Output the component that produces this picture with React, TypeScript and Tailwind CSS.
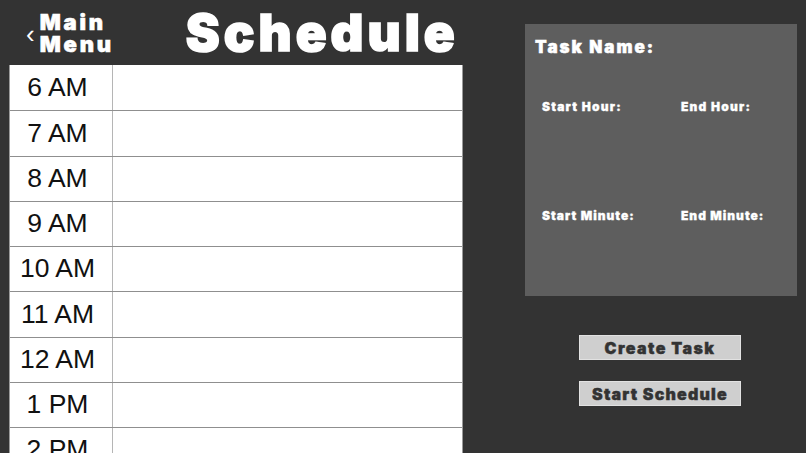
const HOURS = ["6 AM", "7 AM", "8 AM", "9 AM", "10 AM", "11 AM", "12 AM", "1 PM", "2 PM", "3 PM"];

const heavy = "font-['Inter','Roboto',sans-serif] font-black";

const App = (): JSX.Element => {
  return (
    <div className="w-[806px] h-[453px] overflow-hidden bg-[#333333] flex">
      <div className="w-[463px] pl-[9px] flex flex-col shrink-0">
        <div className="h-[65px] flex items-center shrink-0">
          <span className="ml-[17px] mt-[2px] text-white text-[26px] leading-none font-['Liberation_Sans',sans-serif]">
            ‹
          </span>
          <div className={`ml-[5px] text-white text-[22px] leading-[22px] ${heavy} tracking-[2.8px] [-webkit-text-stroke:0.6px_white]`}>
            <div>Main</div>
            <div>Menu</div>
          </div>
          <div className={`ml-[72px] text-white text-[51px] leading-none ${heavy} tracking-[4px] [-webkit-text-stroke:1.6px_white]`}>
            Schedule
          </div>
        </div>
        <div className="bg-white border-l border-r border-[#9a9a9a] flex flex-col">
          {HOURS.map((hour, i) => (
            <div
              key={hour}
              className={`h-[45.25px] shrink-0 flex ${i > 0 ? "border-t border-[#8f8f8f]" : ""}`}
            >
              <div className="w-[103px] shrink-0 border-r border-[#b5b5b5] flex items-center justify-center pr-[7px] text-[26.5px] text-[#111] font-['Liberation_Sans',sans-serif]">
                {hour}
              </div>
              <div className="flex-1" />
            </div>
          ))}
        </div>
      </div>
      <div className="flex-1 pl-[62px] pr-[9px] pt-[24px] flex flex-col">
        <div className="h-[272px] bg-[#5e5e5e] pl-[10px] pt-[12px] text-white">
          <div className={`text-[17px] leading-[22px] ${heavy} tracking-[2px] [-webkit-text-stroke:0.5px_white]`}>Task Name:</div>
          <div className={`mt-[40px] grid grid-cols-[139px_1fr] pl-[7px] text-[12px] ${heavy} tracking-[1.2px] [-webkit-text-stroke:0.3px_white]`}>
            <div>Start Hour:</div>
            <div>End Hour:</div>
          </div>
          <div className={`mt-[91px] grid grid-cols-[139px_1fr] pl-[7px] text-[12px] ${heavy} tracking-[1px] [-webkit-text-stroke:0.3px_white]`}>
            <div>Start Minute:</div>
            <div>End Minute:</div>
          </div>
        </div>
        <div className="flex flex-col items-center mt-[39px] gap-[21px] pr-[2px]">
          <button className={`w-[162px] h-[25px] bg-[#cfcfcf] border border-[#e2e2e2] text-[#333] text-[16px] leading-none ${heavy} tracking-[1.4px] [-webkit-text-stroke:0.4px_#333]`}>
            Create Task
          </button>
          <button className={`w-[162px] h-[25px] bg-[#cfcfcf] border border-[#e2e2e2] text-[#333] text-[16px] leading-none ${heavy} tracking-[1.2px] [-webkit-text-stroke:0.4px_#333]`}>
            Start Schedule
          </button>
        </div>
      </div>
    </div>
  );
};

export default App;
